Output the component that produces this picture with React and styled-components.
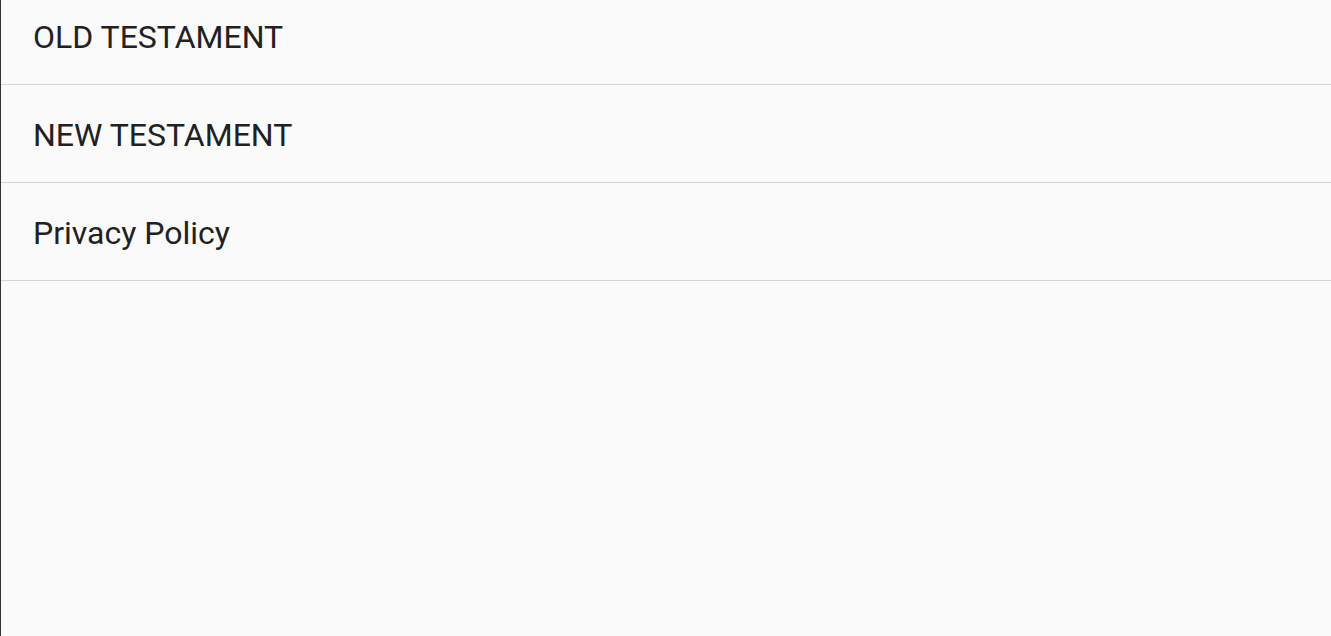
import React from "react";
import styled, { createGlobalStyle } from "styled-components";

const GlobalStyle = createGlobalStyle`
  html, body {
    margin: 0;
    padding: 0;
    height: 100%;
    background: #fafafa;
    overflow: hidden;
  }
  #root {
    height: 100%;
  }
`;

const items = ["OLD TESTAMENT", "NEW TESTAMENT", "Privacy Policy"];

function App() {
  return (
    <>
      <GlobalStyle />
      <MenuStyled>
        <ul className="menu-items">
          {items.map((item) => (
            <li className="menu-item" key={item}>
              {item}
            </li>
          ))}
        </ul>
      </MenuStyled>
    </>
  );
}

const MenuStyled = styled.nav`
  height: 100%;
  background: #fafafa;
  border-left: 1px solid #333333;
  overflow: hidden;
  .menu-items {
    list-style: none;
    margin: -13px 0 0 0;
    padding: 0;
  }
  .menu-item {
    display: flex;
    align-items: center;
    box-sizing: border-box;
    height: 98px;
    padding: 2px 0 0 32px;
    border-bottom: 1px solid #d6d6d6;
    font-family: Roboto, "Liberation Sans", sans-serif;
    font-size: 32px;
    color: #212121;
    cursor: pointer;
  }
`;

export default App;
